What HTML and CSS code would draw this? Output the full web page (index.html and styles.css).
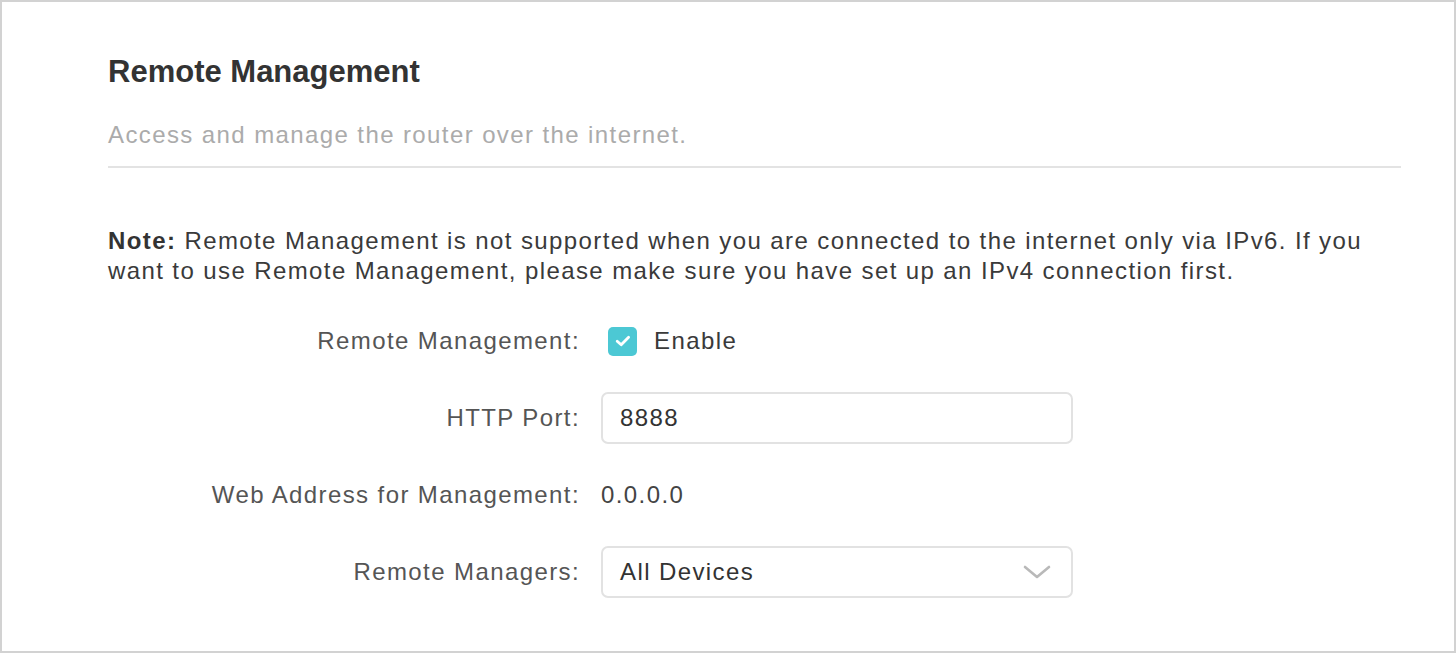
FILE: index.html
```html
<!DOCTYPE html>
<html>
<head>
<meta charset="utf-8">
<link rel="stylesheet" href="styles.css">
</head>
<body>
<div class="frame">
  <div class="content">
    <h1 class="title">Remote Management</h1>
    <p class="subtitle">Access and manage the router over the internet.</p>
    <div class="divider"></div>
    <p class="note"><b class="note-key">Note:</b> Remote Management is not supported when you are connected to the internet only via IPv6. If you want to use Remote Management, please make sure you have set up an IPv4 connection first.</p>
    <div class="form">
      <div class="row">
        <div class="label">Remote Management:</div>
        <div class="value">
          <span class="checkbox">
            <svg width="20" height="20" viewBox="0 0 20 20"><path d="M4.2 10.2 L8.2 13.8 L15.6 6.2" fill="none" stroke="#fff" stroke-width="2.8" stroke-linecap="round" stroke-linejoin="round"/></svg>
          </span>
          <span class="check-label">Enable</span>
        </div>
      </div>
      <div class="row">
        <div class="label">HTTP Port:</div>
        <div class="value">
          <div class="input">8888</div>
        </div>
      </div>
      <div class="row">
        <div class="label">Web Address for Management:</div>
        <div class="value"><span class="plain">0.0.0.0</span></div>
      </div>
      <div class="row">
        <div class="label">Remote Managers:</div>
        <div class="value">
          <div class="input select">
            <span>All Devices</span>
            <svg class="chev" width="28" height="16" viewBox="0 0 28 16"><path d="M2 3 L14 13 L26 3" fill="none" stroke="#b9b9b9" stroke-width="2.6" stroke-linecap="round" stroke-linejoin="round"/></svg>
          </div>
        </div>
      </div>
    </div>
  </div>
</div>
</body>
</html>
```

FILE: styles.css
```css
html, body {
  margin: 0;
  padding: 0;
  background: #fff;
}
.frame {
  box-sizing: border-box;
  width: 1456px;
  height: 653px;
  border: 2px solid #d2d2d2;
  font-family: "Liberation Sans", Arial, sans-serif;
  color: #333;
}
.content {
  padding: 50px 53px 0 106px;
}
.title {
  margin: 0;
  font-size: 31px;
  line-height: 40px;
  font-weight: bold;
  color: #333;
  letter-spacing: 0;
}
.subtitle {
  margin: 28px 0 0 0;
  font-size: 24px;
  line-height: 30px;
  letter-spacing: 1.4px;
  color: #ababab;
}
.divider {
  height: 2px;
  background: #e3e3e3;
  margin-top: 16px;
}
.note {
  margin: 58px 0 0 0;
  font-size: 24px;
  line-height: 30px;
  letter-spacing: 1.4px;
  color: #3a3a3a;
}
.note-key {
  font-weight: bold;
  color: #333;
}
.form {
  margin-top: 29px;
  display: flex;
  flex-direction: column;
  gap: 25px;
}
.row {
  display: flex;
  align-items: center;
  height: 52px;
}
.label {
  width: 493px;
  text-align: right;
  font-size: 24px;
  letter-spacing: 1.4px;
  color: #555;
  padding-right: 21px;
  box-sizing: border-box;
}
.value {
  display: flex;
  align-items: center;
  font-size: 24px;
  letter-spacing: 1.4px;
  color: #3a3a3a;
}
.checkbox {
  width: 29px;
  height: 29px;
  margin-left: 7px;
  border-radius: 5px;
  background: #4cc8d4;
  display: flex;
  align-items: center;
  justify-content: center;
}
.check-label {
  margin-left: 17px;
}
.input {
  box-sizing: border-box;
  width: 472px;
  height: 52px;
  border: 2px solid #e2e2e2;
  border-radius: 7px;
  padding-left: 17px;
  display: flex;
  align-items: center;
  color: #333;
}
.select {
  justify-content: space-between;
  padding-right: 20px;
}
.chev {
  display: block;
}
.plain {
  color: #444;
}
```
